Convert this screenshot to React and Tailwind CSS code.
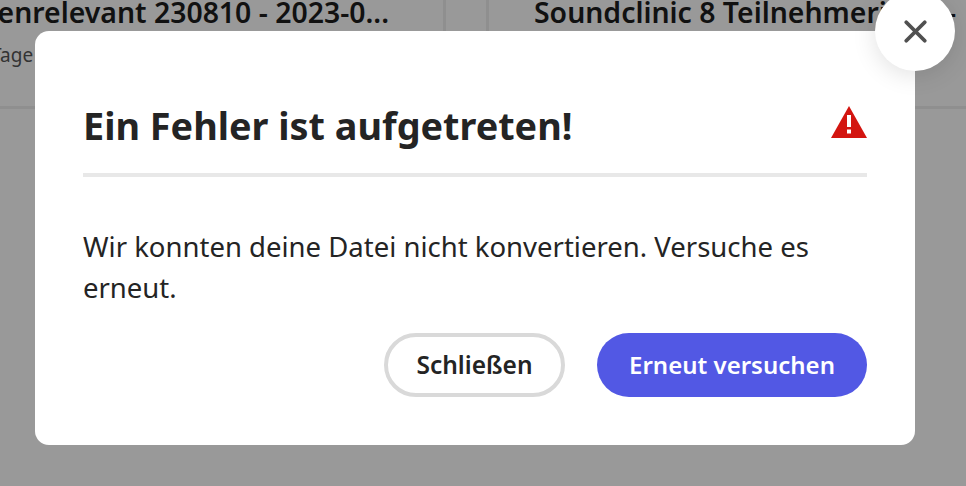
import { X } from "lucide-react";

function WarningIcon() {
  return (
    <svg width="36" height="32" viewBox="0 0 36 32" className="mt-[5px]">
      <path d="M18 0 L36 32 L0 32 Z" fill="#d31510" />
      <rect x="16" y="9" width="4" height="12" fill="#fff" />
      <rect x="16" y="23.5" width="4" height="4" fill="#fff" />
    </svg>
  );
}

export default function App() {
  return (
    <div className="relative w-[966px] h-[486px] overflow-hidden bg-[#999999] font-['Noto_Sans',sans-serif]">
      {/* list behind the dialog */}
      <div className="flex h-[109px] border-b-[3px] border-[#8f8f8f]">
        <div className="w-[446px] shrink-0 border-r-[3px] border-[#8f8f8f] overflow-hidden">
          <div className="w-[389px] text-[28.4px] leading-[28px] font-semibold text-[#111] whitespace-nowrap -mt-[2px] flex justify-end">
            enrelevant 230810 - 2023-0...
          </div>
          <div className="text-[19px] leading-[24px] text-[#333] mt-[17px] -ml-[9px]">Tage</div>
        </div>
        <div className="w-[43px] shrink-0 border-r-[3px] border-[#8f8f8f]" />
        <div className="flex-1 overflow-hidden pl-[45px]">
          <div className="text-[28.4px] leading-[28px] font-semibold text-[#111] whitespace-nowrap -mt-[2px]">
            Soundclinic 8 Teilnehmerinne -
          </div>
        </div>
      </div>

      {/* dialog */}
      <div className="absolute left-[35px] top-[31px] w-[880px] h-[414px] bg-white rounded-[14px] px-[48px] pt-[70px]">
        <div className="flex justify-between items-start h-[76px] border-b-[4px] border-[#e8e8e8]">
          <h1 className="text-[37.8px] leading-[50px] font-bold text-[#242424]">Ein Fehler ist aufgetreten!</h1>
          <WarningIcon />
        </div>
        <p className="mt-[49px] text-[27.5px] leading-[41px] text-[#242424]">
          Wir konnten deine Datei nicht konvertieren. Versuche es erneut.
        </p>
        <div className="flex justify-end gap-[32px] mt-[25px]">
          <button className="w-[181px] h-[64px] rounded-full border-[4px] border-[#d9d9d9] bg-white text-[24.5px] font-semibold text-[#242424]">
            Schließen
          </button>
          <button className="w-[270px] h-[64px] rounded-full bg-[#5258e4] text-[24px] font-semibold text-white">
            Erneut versuchen
          </button>
        </div>
      </div>

      {/* close button */}
      <button className="absolute left-[875px] top-[-9px] w-[80px] h-[80px] rounded-full bg-white flex items-center justify-center shadow-[0_4px_24px_rgba(0,0,0,0.12)]">
        <X size={37} strokeWidth={2.5} className="text-[#505050]" />
      </button>
    </div>
  );
}
